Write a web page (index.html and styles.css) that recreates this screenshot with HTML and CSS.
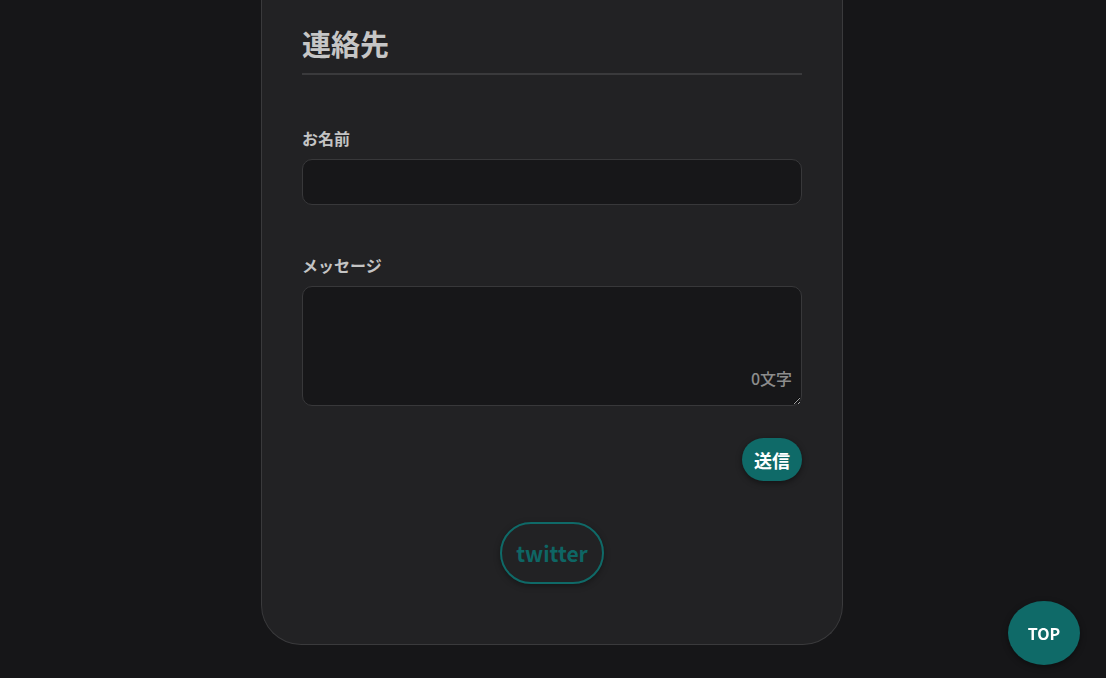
FILE: index.html
```html
<!DOCTYPE html>
<html lang="ja">
<head>
<meta charset="utf-8">
<link rel="stylesheet" href="styles.css">
</head>
<body>
<main class="page">
  <section class="card">
    <h2 class="title">連絡先</h2>
    <form class="form">
      <div class="field">
        <label class="label">お名前</label>
        <input class="input" type="text">
      </div>
      <div class="field">
        <label class="label">メッセージ</label>
        <div class="area-wrap">
          <textarea class="area"></textarea>
          <span class="count">0文字</span>
        </div>
      </div>
      <div class="actions">
        <button type="button" class="send">送信</button>
      </div>
    </form>
    <div class="links">
      <a class="twitter">twitter</a>
    </div>
  </section>
</main>
<a class="top">TOP</a>
</body>
</html>
```
FILE: styles.css
```css
* { box-sizing: border-box; }
html, body { margin: 0; padding: 0; }
body {
  background: #161618;
  font-family: "Noto Sans CJK JP", "Noto Sans", sans-serif;
  color: #c4c4c4;
  height: 678px;
  overflow: hidden;
}
.page {
  display: flex;
  justify-content: center;
  padding-right: 2px;
}
.card {
  width: 582px;
  background: #222224;
  border: 1px solid #3a3a3c;
  border-top: none;
  border-radius: 0 0 40px 40px;
  padding: 22px 40px 60px;
}
.title {
  margin: 0;
  font-size: 29px;
  font-weight: 700;
  line-height: 42px;
  color: #c6c6c6;
  padding-bottom: 9px;
  border-bottom: 2px solid #3a3a3c;
}
.form {
  display: flex;
  flex-direction: column;
}
.field {
  display: flex;
  flex-direction: column;
  margin-top: 51px;
}
.field + .field { margin-top: 48px; }
.label {
  font-size: 16px;
  font-weight: 700;
  line-height: 24px;
  color: #c4c4c4;
  margin-bottom: 9px;
}
.input {
  height: 46px;
  background: #171719;
  border: 1px solid #38383a;
  border-radius: 10px;
  color: #ddd;
}
.area-wrap { position: relative; }
.area {
  display: block;
  width: 100%;
  height: 120px;
  background: #171719;
  border: 1px solid #38383a;
  border-radius: 10px;
  resize: vertical;
}
.count {
  position: absolute;
  right: 10px;
  bottom: 18px;
  font-size: 16px;
  font-weight: 500;
  line-height: 20px;
  color: #8c8c8c;
}
.actions {
  display: flex;
  justify-content: flex-end;
  margin-top: 32px;
}
.send {
  height: 43px;
  padding: 0 12px;
  border: none;
  border-radius: 22px;
  background: #0f6a68;
  color: #fff;
  font-family: "Noto Sans CJK JP", sans-serif;
  font-size: 18px;
  font-weight: 700;
  box-shadow: 0 2px 6px rgba(0,0,0,0.45);
}
.links {
  display: flex;
  justify-content: center;
  margin-top: 41px;
}
.twitter {
  display: flex;
  align-items: center;
  justify-content: center;
  width: 104px;
  height: 62px;
  border: 2px solid #0f6a68;
  border-radius: 31px;
  color: #0e6664;
  font-family: "Noto Sans CJK JP", sans-serif;
  font-size: 21px;
  font-weight: 700;
  box-shadow: 0 2px 6px rgba(0,0,0,0.35);
}
.top {
  position: fixed;
  right: 26px;
  bottom: 13px;
  width: 72px;
  height: 64px;
  border-radius: 50%;
  background: #0f6a68;
  color: #fff;
  display: flex;
  align-items: center;
  justify-content: center;
  font-family: "Noto Sans CJK JP", sans-serif;
  font-size: 16px;
  font-weight: 700;
  box-shadow: 0 2px 6px rgba(0,0,0,0.4);
}
```
